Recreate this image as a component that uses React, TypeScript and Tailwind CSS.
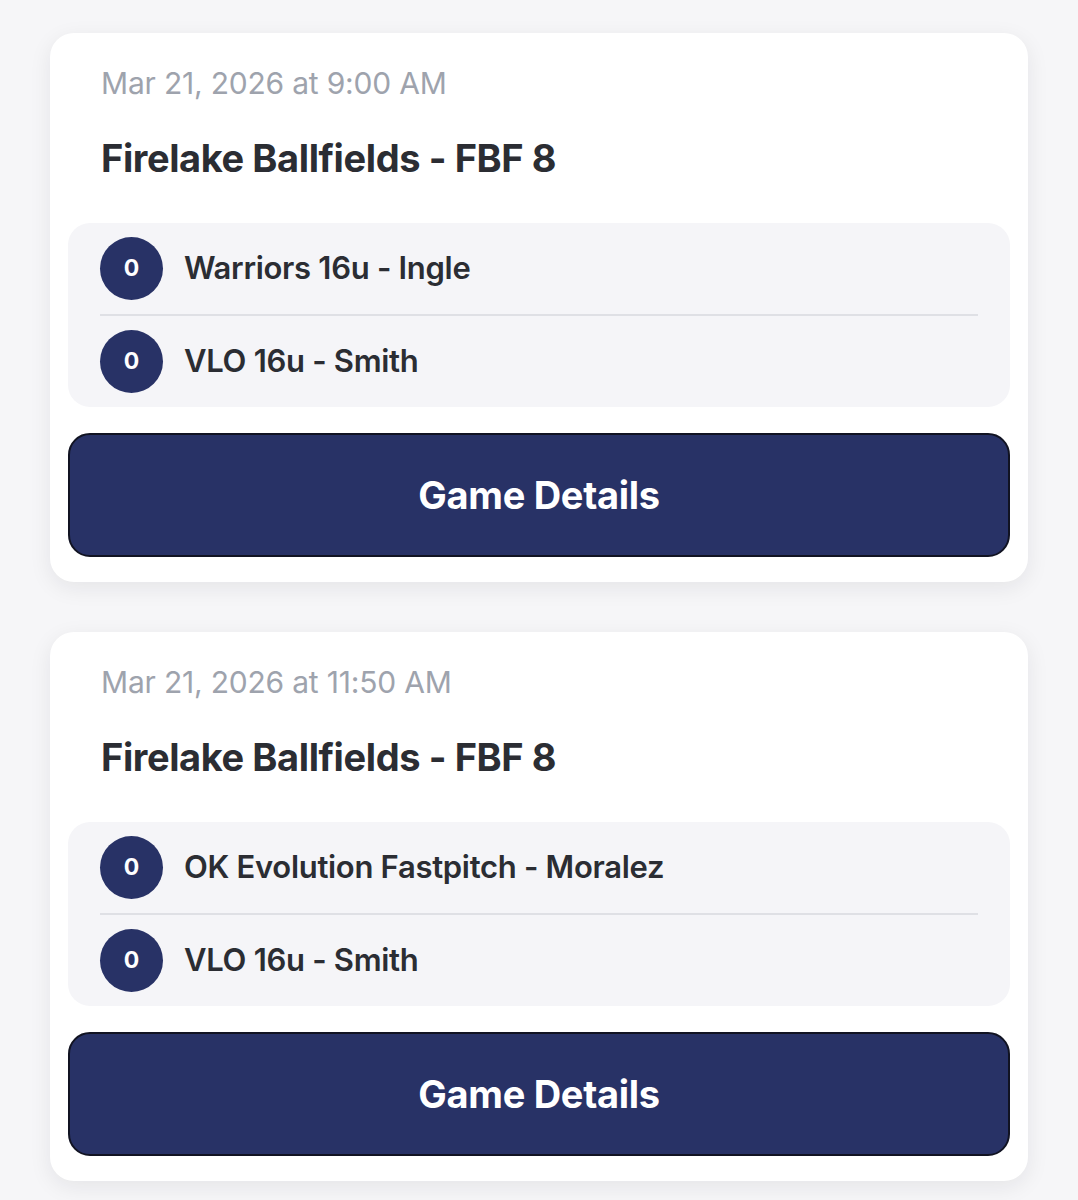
import React from "react";

type Game = {
    date: string;
    venue: string;
    teams: { name: string; score: number }[];
};

const games: Game[] = [
    {
        date: "Mar 21, 2026 at 9:00 AM",
        venue: "Firelake Ballfields - FBF 8",
        teams: [
            { name: "Warriors 16u - Ingle", score: 0 },
            { name: "VLO 16u - Smith", score: 0 },
        ],
    },
    {
        date: "Mar 21, 2026 at 11:50 AM",
        venue: "Firelake Ballfields - FBF 8",
        teams: [
            { name: "OK Evolution Fastpitch - Moralez", score: 0 },
            { name: "VLO 16u - Smith", score: 0 },
        ],
    },
];

function GameCard({ game }: { game: Game }) {
    return (
        <div className="bg-white rounded-[24px] shadow-[0_6px_22px_rgba(20,20,40,0.08)] px-[18px] pb-[25px]">
            {/* header */}
            <div className="px-[33px] pt-[32px] pb-[43px]">
                <div className="text-[30px] leading-[36px] text-[#9ea3ad] tracking-[-0.2px]">{game.date}</div>
                <div className="mt-[35px] text-[38px] leading-[44px] font-bold text-[#2b2d33] tracking-[-0.4px]">
                    {game.venue}
                </div>
            </div>

            {/* teams */}
            <div className="bg-[#f5f5f8] rounded-[22px] px-[32px]">
                {game.teams.map((team, i) => (
                    <div
                        key={i}
                        className={
                            "flex items-center gap-[21px] py-[14px] " +
                            (i > 0 ? "border-t-2 border-[#dfe0e5]" : "")
                        }
                    >
                        <div className="w-[63px] h-[63px] rounded-full bg-[#283266] flex items-center justify-center text-white text-[23px] font-bold">
                            {team.score}
                        </div>
                        <div className="text-[31px] font-semibold text-[#2b2d33] tracking-[-0.3px]">{team.name}</div>
                    </div>
                ))}
            </div>

            <button className="mt-[26px] w-full h-[124px] rounded-[22px] bg-[#283266] border-2 border-[#111322] text-white text-[38px] font-bold tracking-[-0.3px]">
                Game Details
            </button>
        </div>
    );
}

export default function App(): React.ReactNode {
    return (
        <div
            className="min-h-screen bg-[#f6f6f8] px-[50px] pt-[33px] pb-[40px] flex flex-col gap-[50px]"
            style={{ fontFamily: "Inter, 'Noto Sans', sans-serif" }}
        >
            {games.map((g, i) => (
                <GameCard key={i} game={g} />
            ))}
        </div>
    );
}
